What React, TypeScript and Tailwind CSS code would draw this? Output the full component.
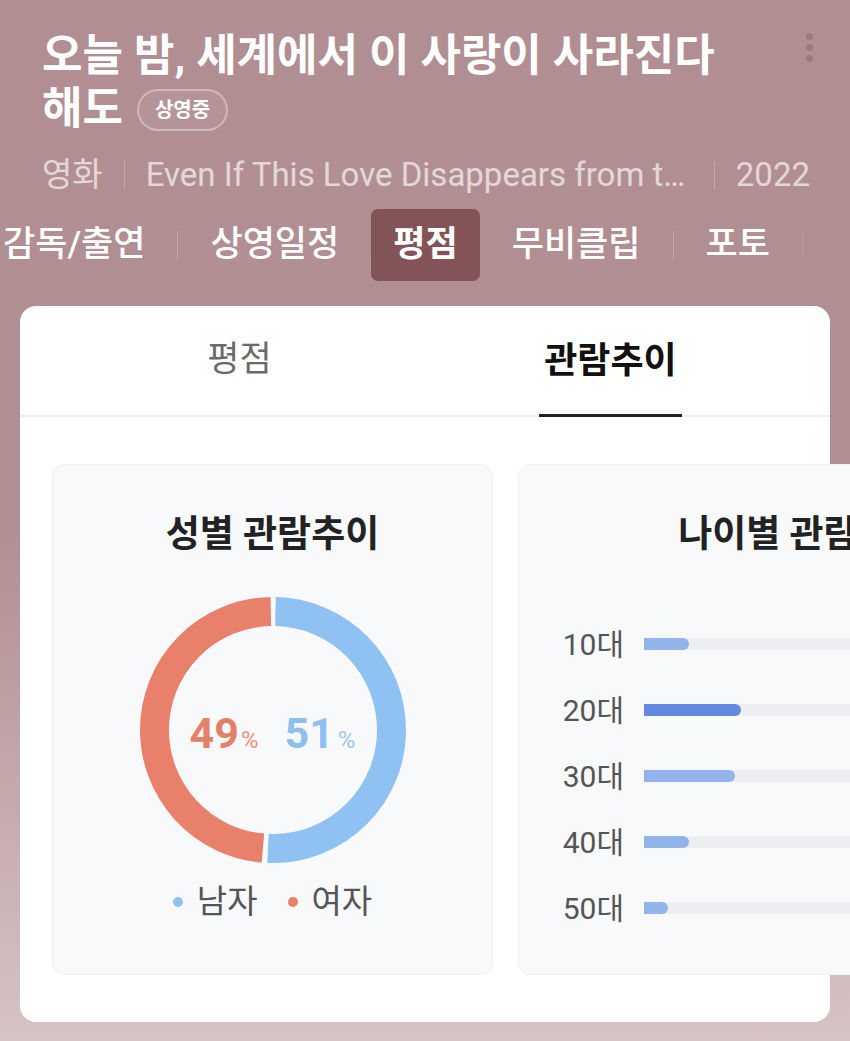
import React from 'react'

const FONT = 'font-["Roboto","Noto_Sans_CJK_KR",sans-serif]'

const AGES = [
  { label: '10대', width: 45, strong: false },
  { label: '20대', width: 97, strong: true },
  { label: '30대', width: 91, strong: false },
  { label: '40대', width: 45, strong: false },
  { label: '50대', width: 24, strong: false },
]

const R = 118.5
const C = 2 * Math.PI * R
const GAP = 5

function Donut({ male }: { male: number }) {
  const blue = (male / 100) * C
  const red = C - blue
  return (
    <div className="relative w-[266px] h-[266px]">
      <svg width="266" height="266" viewBox="0 0 266 266" className="-rotate-90">
        <circle cx="133" cy="133" r={R} fill="none" stroke="#8fc2f3" strokeWidth="29"
          strokeDasharray={`${blue - GAP} ${C}`} strokeDashoffset={-GAP / 2} />
        <circle cx="133" cy="133" r={R} fill="none" stroke="#e9806b" strokeWidth="29"
          strokeDasharray={`${red - GAP} ${C}`} strokeDashoffset={-(blue + GAP / 2)} />
      </svg>
      <div className="absolute inset-0 flex items-center justify-center gap-[26px] pt-[6px]">
        <div className="flex items-baseline">
          <span className="text-[43px] font-bold leading-none text-[#e67f69]">{100 - male}</span>
          <span className="text-[24px] leading-none text-[#e8907e] ml-[2px]">%</span>
        </div>
        <div className="flex items-baseline">
          <span className="text-[43px] font-bold leading-none text-[#8dbff1]">{male}</span>
          <span className="text-[24px] leading-none text-[#9cc8f1] ml-[4px]">%</span>
        </div>
      </div>
    </div>
  )
}

function Tab({ label, active }: { label: string; active?: boolean }) {
  return (
    <div className={active
      ? 'h-[72px] px-[22px] flex items-center rounded-[7px] bg-[#825457] font-bold text-white'
      : 'h-[72px] px-[22px] flex items-center font-medium text-white'}>
      {label}
    </div>
  )
}

const Sep = () => <div className="w-px h-[28px] bg-white/25 shrink-0" />

export default function App() {
  return (
    <div className={`${FONT} relative w-[850px] h-[1041px] overflow-hidden bg-[linear-gradient(to_bottom,#b18e91_0%,#b28f92_52%,#d6c3c4_100%)]`}>
      {/* header */}
      <div className="relative pl-[42px] pr-[70px] pt-[30px]">
        <h1 className="text-[44px] leading-[53px] font-bold text-white break-keep">
          오늘 밤, 세계에서 이 사랑이 사라진다 해도
          <span className="inline-flex items-center align-[7px] ml-[14px] h-[42px] px-[16px] rounded-full border-2 border-white/35 bg-white/5 text-[20px] font-bold leading-none">
            상영중
          </span>
        </h1>
        <div className="absolute right-[37px] top-[33px] flex flex-col gap-[4px]">
          <span className="w-[7px] h-[7px] rounded-full bg-[#9c797d]" />
          <span className="w-[7px] h-[7px] rounded-full bg-[#9c797d]" />
          <span className="w-[7px] h-[7px] rounded-full bg-[#9c797d]" />
        </div>
      </div>

      <div className="flex items-center gap-[21px] pl-[42px] pr-[40px] mt-[19px] h-[40px] text-[33px] text-white/65">
        <span className="shrink-0">영화</span>
        <Sep />
        <span className="flex-1 min-w-0 truncate">Even If This Love Disappears from the World Tonight</span>
        <Sep />
        <span className="shrink-0">2022</span>
      </div>

      {/* menu tabs */}
      <div className="relative mt-[14px]">
        <div className="flex items-center gap-[10px] ml-[-19px] whitespace-nowrap text-[35px]">
          <Tab label="감독/출연" />
          <Sep />
          <Tab label="상영일정" />
          <Tab label="평점" active />
          <Tab label="무비클립" />
          <Sep />
          <Tab label="포토" />
          <Sep />
          <Tab label="리뷰" />
        </div>
        <div className="absolute right-0 top-0 h-full w-[52px] bg-[linear-gradient(to_left,#b18e91_30%,rgba(177,142,145,0.55))]" />
      </div>

      {/* panel */}
      <div className="ml-[20px] mt-[25px] w-[810px] h-[716px] rounded-[16px] bg-white">
        <div className="flex px-[34px] h-[111px] border-b-2 border-[#eef0f3]">
          <div className="flex-1 flex items-center justify-center text-[35px] text-[#6b6b6b]">평점</div>
          <div className="relative flex-1 flex items-center justify-center text-[36px] font-bold text-[#111]">
            관람추이
            <span className="absolute bottom-[-2px] w-[143px] h-[3px] bg-[#222]" />
          </div>
        </div>

        <div className="flex gap-[25px] pt-[47px] pl-[32px]">
          {/* gender */}
          <div className="shrink-0 w-[441px] h-[511px] rounded-[12px] border border-[#eef0f2] bg-[#f8f9fb] flex flex-col items-center pt-[50px]">
            <div className="text-[37px] leading-[40px] font-bold text-[#222]">성별 관람추이</div>
            <div className="mt-[42px]">
              <Donut male={51} />
            </div>
            <div className="mt-[20px] flex items-center h-[38px] text-[33px] text-[#555]">
              <span className="w-[10px] h-[10px] rounded-full bg-[#8fc2f3]" />
              <span className="ml-[14px]">남자</span>
              <span className="ml-[30px] w-[10px] h-[10px] rounded-full bg-[#e9806b]" />
              <span className="ml-[14px]">여자</span>
            </div>
          </div>

          {/* age */}
          <div className="shrink-0 w-[568px] h-[511px] rounded-[12px] border border-[#eef0f2] bg-[#f8f9fb] flex flex-col pt-[50px]">
            <div className="text-center text-[37px] leading-[40px] font-bold text-[#222]">나이별 관람추이</div>
            <div className="mt-[56px] flex flex-col">
              {AGES.map(a => (
                <div key={a.label} className="h-[66px] flex items-center pl-[43px] pr-[40px] gap-[20px]">
                  <span className="w-[62px] text-right text-[30px] text-[#555]">{a.label}</span>
                  <div className="flex-1 h-[12px] bg-[#eceef2] rounded-r-full">
                    <div className={a.strong ? 'h-full rounded-r-full bg-[#6388e0]' : 'h-full rounded-r-full bg-[#93b4ea]'}
                      style={{ width: a.width }} />
                  </div>
                </div>
              ))}
            </div>
          </div>
        </div>
      </div>
    </div>
  )
}
